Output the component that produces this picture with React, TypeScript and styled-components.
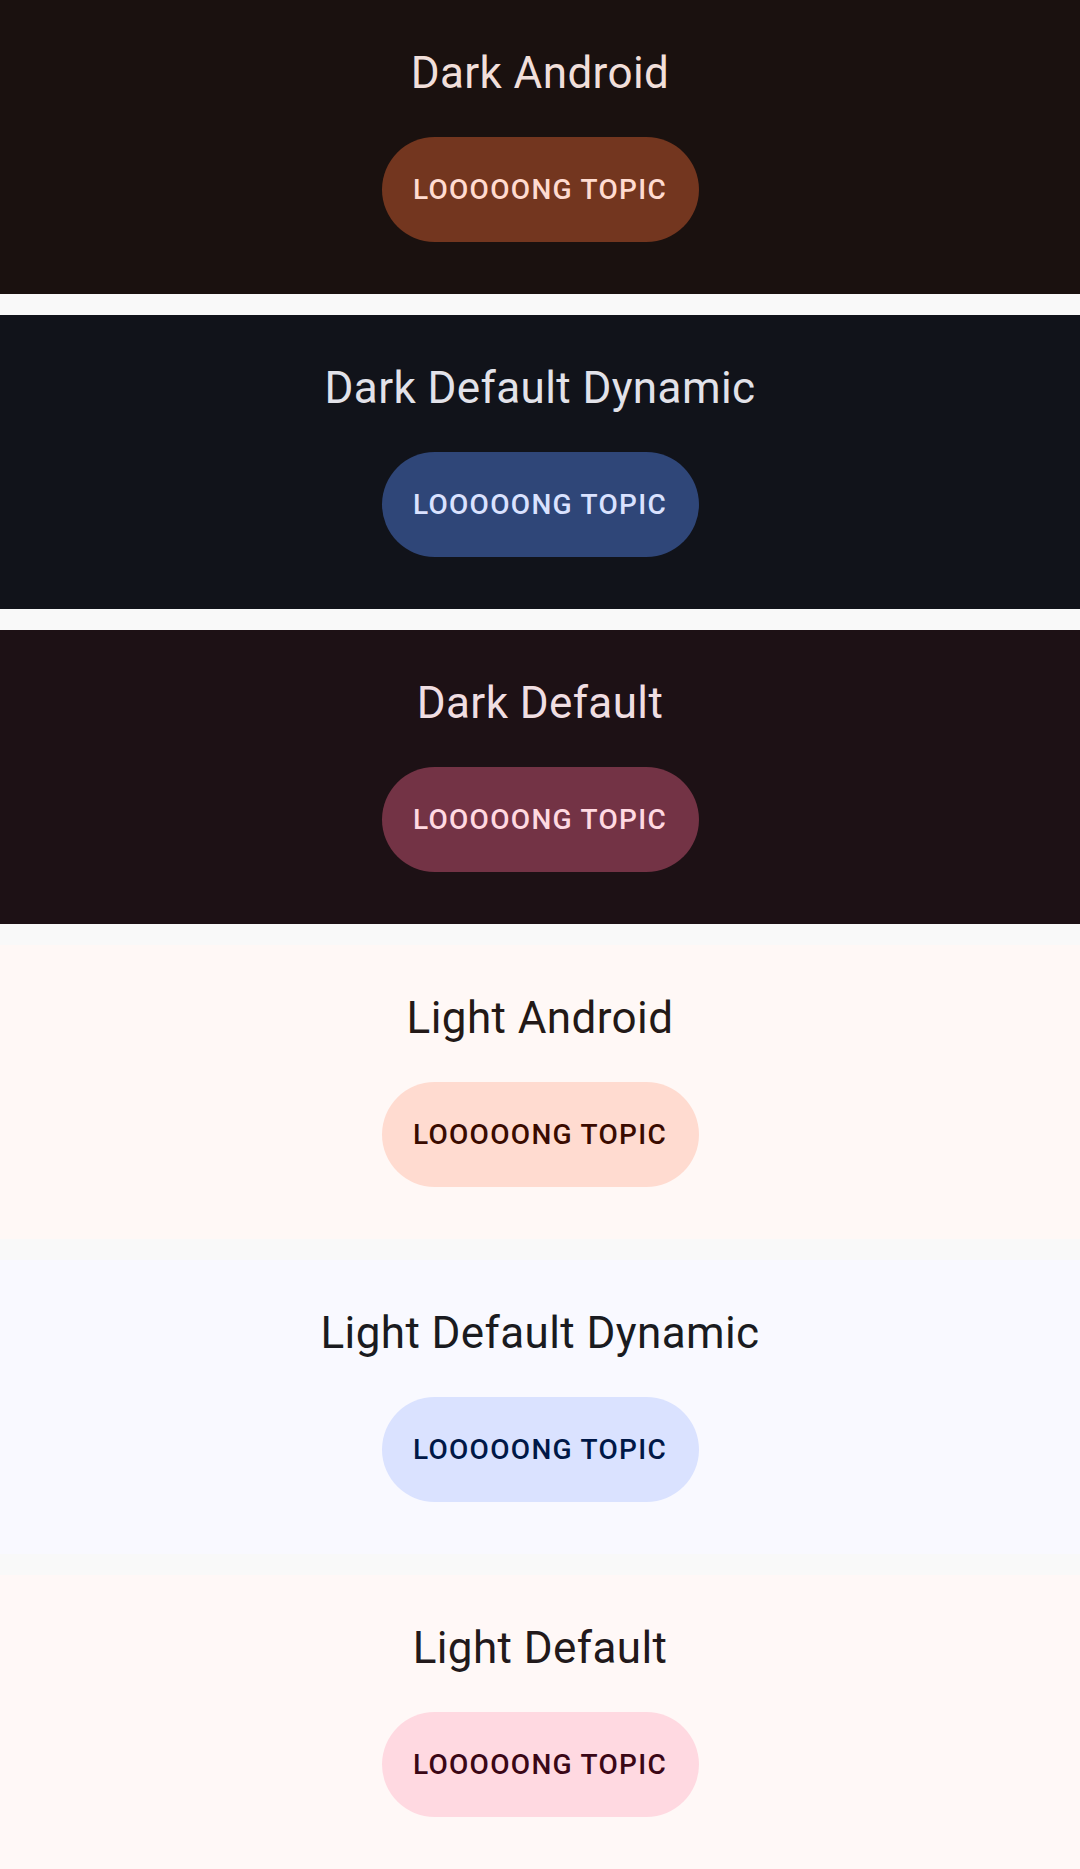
import React from "react";
import styled, { createGlobalStyle } from "styled-components";

type ThemeColors = {
    name: string
    background: string
    onBackground: string
    chip: string
    onChip: string
}

const themes: ThemeColors[] = [
    { name: "Dark Android", background: "#1a110f", onBackground: "#f1dfda", chip: "#73361f", onChip: "#ffdbd0" },
    { name: "Dark Default Dynamic", background: "#11131a", onBackground: "#e2e2e9", chip: "#2f4678", onChip: "#dae2ff" },
    { name: "Dark Default", background: "#1d1115", onBackground: "#f0dee2", chip: "#733345", onChip: "#ffd9e1" },
    { name: "Light Android", background: "#fff8f6", onBackground: "#231917", chip: "#ffdbd0", onChip: "#3a0b00" },
    { name: "Light Default Dynamic", background: "#f9f9ff", onBackground: "#1a1b20", chip: "#dae2ff", onChip: "#001847" },
    { name: "Light Default", background: "#fff8f7", onBackground: "#22191b", chip: "#ffd9e1", onChip: "#3b0716" },
]

const GlobalStyle = createGlobalStyle`
    html, body {
        margin: 0;
        padding: 0;
        background: #f9f9f9;
        font-family: Roboto, "Liberation Sans", sans-serif;
    }
`

export default function App() {
    return (
        <>
            <GlobalStyle />
            <Page>
                {themes.map((t) => (
                    <Section key={t.name} $bg={t.background}>
                        <Title $color={t.onBackground}>{t.name}</Title>
                        <Chip $bg={t.chip} $color={t.onChip}>Looooong topic</Chip>
                    </Section>
                ))}
            </Page>
        </>
    );
}

const Page = styled.div`
    display: flex;
    flex-direction: column;
    gap: 21px;
`

const Section = styled.section<{ $bg: string }>`
    height: 294px;
    box-sizing: border-box;
    padding-top: 45px;
    display: flex;
    flex-direction: column;
    align-items: center;
    gap: 36px;
    background: ${(p) => p.$bg};
`

const Title = styled.h2<{ $color: string }>`
    margin: 0;
    font-size: 44px;
    line-height: 56px;
    font-weight: 400;
    letter-spacing: 0.4px;
    color: ${(p) => p.$color};
`

const Chip = styled.div<{ $bg: string; $color: string }>`
    width: 317px;
    height: 105px;
    border-radius: 53px;
    display: flex;
    align-items: center;
    justify-content: center;
    background: ${(p) => p.$bg};
    color: ${(p) => p.$color};
    font-size: 28px;
    font-weight: 500;
    letter-spacing: 1.3px;
    text-transform: uppercase;
`
